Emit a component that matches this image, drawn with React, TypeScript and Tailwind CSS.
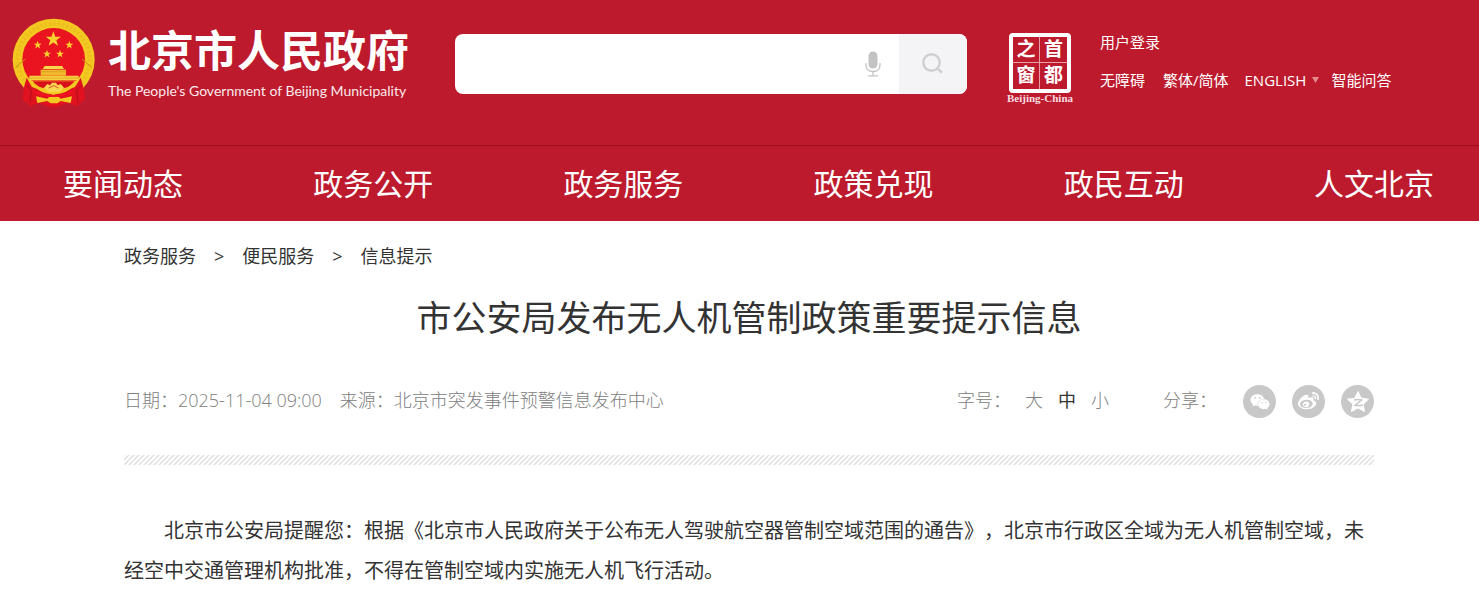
import { useState } from "react";
import { FaWeibo, FaWeixin } from "react-icons/fa";

const NAV_ITEMS = [
  "要闻动态",
  "政务公开",
  "政务服务",
  "政策兑现",
  "政民互动",
  "人文北京",
];

const BREADCRUMBS = ["政务服务", "便民服务", "信息提示"];

const FONT_SIZES = ["大", "中", "小"];

const STAR =
  "M0,-10 L2.4,-3.2 L9.5,-3.1 L3.8,1.2 L5.9,8.1 L0,4 L-5.9,8.1 L-3.8,1.2 L-9.5,-3.1 L-2.4,-3.2 Z";

const Emblem = () => (
  <svg className="h-[92px] w-[85px] shrink-0" viewBox="33 52 255 276">
    <circle cx="161" cy="180" r="123" fill="#f3c921" />
    <circle cx="161" cy="180" r="108" fill="none" stroke="#dfa41c" strokeWidth="12" strokeDasharray="7 6" opacity="0.3" />
    <path
      d="M80 234 L72 262 L68 298 Q74 308 84 310 L90 320 L118 310 L140 318 L160 324 L182 318 L204 310 L232 320 L238 310 Q250 308 256 296 L250 262 L242 234 L225 262 L160 286 L96 262 Z"
      fill="#e0121f"
    />
    <circle cx="161" cy="179" r="94" fill="#ea1420" />
    <path d="M46 204 L76 178 M276 204 L246 178" stroke="#c98d14" strokeWidth="3" />
    <path d="M82 232 Q110 284 161 284 Q212 284 242 232 L228 243 L96 243 Z" fill="#f3c921" />
    <path d="M98 245 H224 Q205 268 182 266 L161 256 L140 266 Q114 266 98 245 Z" fill="#d8101c" />
    <path d="M88 228 H236 V242 H88 Z" fill="#f7cf3e" />
    <path d="M122 210 H198 V228 H122 Z" fill="#f0b92c" />
    <path d="M128 208 L134 199 H186 L192 208 Z" fill="#f9d74c" />
    <path d="M122 216 H198 M88 235 H236" stroke="#d99a1c" strokeWidth="2" />
    <path
      d="M132 264 L142 253 L150 257 L156 249 H168 L173 257 L182 253 L192 264 L178 277 H146 Z"
      fill="#f8d84f"
    />
    <path d="M146 265 L161 258 L176 265" fill="none" stroke="#d8101c" strokeWidth="2" />
    <path d="M108 290 L142 297 L148 291 H176 L182 297 L216 290 L212 310 L182 304 L172 311 H152 L142 304 L112 310 Z" fill="#f3c921" />
    <path d="M80 256 L94 272 L90 310 M244 256 L230 272 L234 310" fill="none" stroke="#b20e19" strokeWidth="3" />
    <path d="M102 276 Q160 302 220 276" fill="none" stroke="#f3141f" strokeWidth="6" />
    <g fill="#f9d22f">
      <path d={STAR} transform="translate(160 119) scale(2.4)" />
      <path d={STAR} transform="translate(113 136) scale(1.25)" />
      <path d={STAR} transform="translate(208 136) scale(1.25)" />
      <path d={STAR} transform="translate(141 163) scale(1.25)" />
      <path d={STAR} transform="translate(180 163) scale(1.25)" />
    </g>
  </svg>
);

const MicIcon = () => (
  <svg className="h-[26px] w-4" viewBox="0 0 16 26" fill="none" stroke="#c3c3c3">
    <rect x="3.5" y="0.5" width="9" height="17" rx="4.5" fill="#c3c3c3" stroke="none" />
    <path d="M1 12 V14 Q1 20.5 8 20.5 Q15 20.5 15 14 V12" strokeWidth="1.3" />
    <path d="M8 20.5 V24.5 M3 24.8 H13" strokeWidth="1.3" />
  </svg>
);

const SearchIcon = () => (
  <svg className="size-[22px]" viewBox="0 0 22 22" fill="none" stroke="#cfcfcf">
    <circle cx="9.5" cy="9.5" r="8.2" strokeWidth="2.4" />
    <path d="M15.2 15.2 L20 19.6" strokeWidth="2.6" />
  </svg>
);

const QzoneIcon = () => (
  <svg className="size-6" viewBox="0 0 24 24">
    <path
      d="M12 1.5 L15.2 8.2 L22.5 9.2 L17.2 14.2 L18.5 21.5 L12 18 L5.5 21.5 L6.8 14.2 L1.5 9.2 L8.8 8.2 Z"
      fill="#fff"
      stroke="#fff"
      strokeLinejoin="round"
    />
    <path d="M8 10 Q12 9 15.5 10 L9 15.3 Q13 16 17 15" fill="none" stroke="#c8c8c8" strokeWidth="1.5" />
  </svg>
);

const Stripes = () => (
  <svg className="mt-[37px] block h-[10px] w-full" aria-hidden="true">
    <defs>
      <pattern id="stripes" width="5" height="5" patternUnits="userSpaceOnUse">
        <path d="M-1 6 L6 -1 M-1 1 L1 -1 M4 6 L6 4" stroke="#dedede" strokeWidth="1.4" />
      </pattern>
    </defs>
    <rect width="100%" height="10" fill="url(#stripes)" />
  </svg>
);

const Seal = () => (
  <a href="#" className="flex w-[70px] shrink-0 flex-col items-center">
    <span className="grid h-[60px] w-[62px] grid-cols-2 grid-rows-2 rounded-sm border-4 border-white text-[19px] leading-[25px] font-bold">
      <span className="border-r border-b border-[#e8a0a8] text-center">之</span>
      <span className="border-b border-[#e8a0a8] text-center">首</span>
      <span className="border-r border-[#e8a0a8] text-center">窗</span>
      <span className="text-center">都</span>
    </span>
    <span className="font-['Liberation_Serif',serif] text-[11px] leading-[11px] font-bold whitespace-nowrap text-[#f6dde0]">
      Beijing-China
    </span>
  </a>
);

const Header = () => (
  <header className="bg-[#bd1a2d] text-white">
    <div className="flex h-[146px] items-start border-b border-[#9f0d1e] pl-[11px]">
      <a href="#" className="flex w-[444px] shrink-0 gap-3 pt-[17px]">
        <Emblem />
        <span className="flex flex-col pt-[9px] whitespace-nowrap">
          <span className="text-[43px] leading-[50px] font-bold">北京市人民政府</span>
          <span className="font-['Lato',sans-serif] text-[14px] leading-[30px] text-[#fbeaec]">
            The People&apos;s Government of Beijing Municipality
          </span>
        </span>
      </a>

      <form
        className="mt-[34px] flex h-[60px] max-w-[512px] flex-1 overflow-hidden rounded-lg bg-white"
        onSubmit={(e) => e.preventDefault()}
      >
        <input
          type="text"
          aria-label="搜索"
          className="min-w-0 flex-1 px-4 text-lg text-[#333] outline-none"
        />
        <button type="button" aria-label="语音" className="px-[18px]">
          <MicIcon />
        </button>
        <button
          type="submit"
          aria-label="搜索"
          className="flex w-[68px] items-center justify-center bg-[#f4f4f6]"
        >
          <SearchIcon />
        </button>
      </form>

      <div className="mt-[33px] ml-[38px] flex gap-[25px]">
        <Seal />
        <div className="-mt-[3px] flex flex-col gap-[14px] text-[15px] leading-6 whitespace-nowrap">
          <a href="#">用户登录</a>
          <div className="flex">
            <a href="#" className="mr-[18px]">无障碍</a>
            <a href="#" className="mr-4">繁体/简体</a>
            <a href="#" className="mr-3 flex items-center gap-[6px]">
              ENGLISH
              <svg className="h-[6px] w-[7px]" viewBox="0 0 7 6">
                <path d="M0 0 H7 L3.5 6 Z" fill="#e58a90" />
              </svg>
            </a>
            <a href="#">智能问答</a>
          </div>
        </div>
      </div>
    </div>

    <nav className="flex h-[75px] items-center justify-between pr-[45px] pl-[63px] text-[30px] whitespace-nowrap">
      {NAV_ITEMS.map((item) => (
        <a key={item} href="#">
          {item}
        </a>
      ))}
    </nav>
  </header>
);

const App = () => {
  const [size, setSize] = useState("中");

  return (
    <div
      className="bg-white font-['Open_Sans','Noto_Sans_CJK_SC',sans-serif] [text-spacing-trim:space-all]"
      lang="zh-CN"
    >
      <Header />

      <main className="pr-[105px] pl-[124px] text-[#333]">
        <div className="flex gap-[18px] pt-[21px] text-[18px] leading-7">
          {BREADCRUMBS.map((item, index) => (
            <span key={item} className="flex gap-[18px]">
              {index > 0 && <span>&gt;</span>}
              <a href="#">{item}</a>
            </span>
          ))}
        </div>

        <h1 className="pt-[22px] text-center text-[35px] leading-[52px]">
          市公安局发布无人机管制政策重要提示信息
        </h1>

        <div className="flex items-start justify-between pt-[41px] text-[18px] leading-[30px] font-light whitespace-nowrap text-[#808080]">
          <div className="flex gap-[18px]">
            <span>日期：2025-11-04 09:00</span>
            <span>来源：北京市突发事件预警信息发布中心</span>
          </div>
          <div className="flex items-start">
            <span>字号：</span>
            <div className="ml-[14px] flex gap-[15px]">
              {FONT_SIZES.map((item) => (
                <button
                  key={item}
                  type="button"
                  className={item === size ? "font-normal text-[#333]" : ""}
                  onClick={() => setSize(item)}
                >
                  {item}
                </button>
              ))}
            </div>
            <span className="ml-[54px]">分享：</span>
            <div className="ml-[26px] flex gap-4 text-white">
              <a href="#" aria-label="微信" className="flex size-[33px] items-center justify-center rounded-full bg-[#c8c8c8]">
                <FaWeixin className="size-[20px]" />
              </a>
              <a href="#" aria-label="微博" className="flex size-[33px] items-center justify-center rounded-full bg-[#c8c8c8]">
                <FaWeibo className="size-[21px]" />
              </a>
              <a href="#" aria-label="QQ空间" className="flex size-[33px] items-center justify-center rounded-full bg-[#c8c8c8]">
                <QzoneIcon />
              </a>
            </div>
          </div>
        </div>

        <Stripes />

        <p className="pt-[46px] indent-[40px] text-[20px] leading-[40px]">
          北京市公安局提醒您：根据《北京市人民政府关于公布无人驾驶航空器管制空域范围的通告》，北京市行政区全域为无人机管制空域，未经空中交通管理机构批准，不得在管制空域内实施无人机飞行活动。
        </p>
      </main>
    </div>
  );
};

export default App;
